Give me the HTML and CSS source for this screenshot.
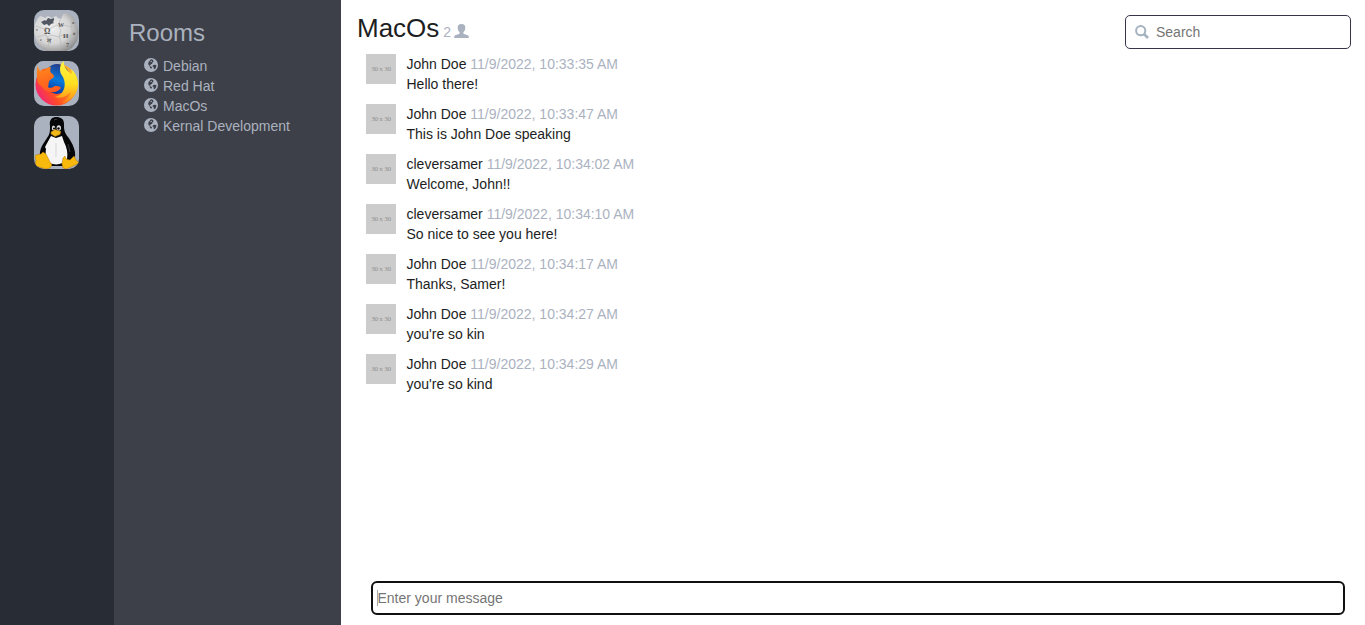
FILE: index.html
```html
<!DOCTYPE html>
<html lang="en">
<head>
<meta charset="utf-8">
<title>Chat</title>
<link rel="stylesheet" href="styles.css">
</head>
<body>
<svg class="defs" aria-hidden="true">
  <symbol id="globe" viewBox="0 0 14 14">
    <path fill="#abb2bf" fill-rule="evenodd" d="M7 0a7 7 0 1 0 0 14A7 7 0 0 0 7 0zM6 1.900L7.400 1.200l1.800.8.3 1.600-1 1-.3 1.200-1.500.7-.7 1.300-1.200-.4-.6-1.700.5-1.900 1-.9zM9 7.200l1.500-.4 1.900.3-.3 2.200-1.300 2-1-.4-.1-1.600-1.200-.8zM5.500 8l1.600.4 1 1.200-.8 1.100-1.200-.8z"/>
    <path fill="#abb2bf" d="M6.400 3.200l1.400-.4.2.9-1.300.6z"/>
  </symbol>
</svg>
<div class="app">
  <nav class="namespaces">
    <div class="tile">
      <svg width="45" height="41" viewBox="0 0 45 41">
        <defs><radialGradient id="wiki" cx=".4" cy=".4" r=".65"><stop offset="0" stop-color="#efefef"/><stop offset=".6" stop-color="#d5d5d5"/><stop offset="1" stop-color="#8c8c8c"/></radialGradient></defs>
        <path fill="url(#wiki)" d="M4 8L8 4l5 1 3-2 5 2 4-2 4 1 4-1 6 4 4 7 2 8-2 9-5 7-7 4H14l-7-4-5-8-2-8 1-8z"/>
        <path fill="#adb3be" d="M6 5l7-3 8-1 6 1 2 3-2 4-3-1-2-2-4 2-4-2-3 2-4-2z"/>
        <path fill="#505760" d="M7 12l4-2 1 1 2-3 3 1 3-1v2l-1 2 1 1-3 1-2 2-2-2-3 1z"/>
        <path fill="none" stroke="#b8b8b8" stroke-width=".7" d="M2 16l8 3 2-2 3 2 8-4 4 2 2-2 9 2 5-3M3 27l8-2 3 2 3-2 8 2 3-2 4 2 9-3M12 17v9l3 4-1 9M26 10l-1 7 2 3-2 7 2 4-2 9M38 8l-1 10 2 4-3 9"/>
        <g class="glyphs"><text x="10" y="24" font-size="8">Ω</text><text x="24" y="17" font-size="6">W</text><text x="13" y="33" font-size="7">ন</text><text x="29" y="28" font-size="7">И</text><text x="32" y="37" font-size="6">7</text><text x="38" y="14" font-size="4">я</text><text x="2" y="21" font-size="4">ν</text><text x="6" y="31" font-size="4">c</text><text x="39" y="25" font-size="4">й</text></g>
      </svg>
    </div>
    <div class="tile">
      <svg width="45" height="45" viewBox="0 0 45 45">
        <defs>
          <linearGradient id="ff" gradientUnits="userSpaceOnUse" x1="40" y1="12" x2="4" y2="36"><stop offset="0" stop-color="#ffb52b"/><stop offset=".4" stop-color="#ff7e1e"/><stop offset=".7" stop-color="#ff4a28"/><stop offset="1" stop-color="#f0257a"/></linearGradient>
          <linearGradient id="face" gradientUnits="userSpaceOnUse" x1="10" y1="4" x2="18" y2="36"><stop offset="0" stop-color="#ff8a1c"/><stop offset=".5" stop-color="#ff6a1c"/><stop offset="1" stop-color="#ff5425"/></linearGradient>
          <linearGradient id="sea" x1=".3" y1="1" x2=".6" y2="0"><stop offset="0" stop-color="#062f9c"/><stop offset=".5" stop-color="#087bdc"/><stop offset="1" stop-color="#233888"/></linearGradient>
          <linearGradient id="tail" x2="0" y2="1"><stop offset="0" stop-color="#fff344"/><stop offset=".55" stop-color="#ffdf20"/><stop offset="1" stop-color="#ff8a18"/></linearGradient>
        </defs>
        <circle cx="22.500" cy="23.500" r="21" fill="url(#ff)"/>
        <path fill="#abb2bf" d="M4 0h27L22 4 10 8 4 6z"/>
        <ellipse cx="23" cy="18" rx="13" ry="15" fill="url(#sea)"/>
        <path fill="url(#face)" d="M4 4c0 3 1 4 2 6 2-1 4-1 5 0 1-2 3-4 6-4-1 2-1 4 0 6 2 1 3 2 3 4-2 2-5 3-5 5-1 2 0 3-1 5 2 2 5 0 7-1 2 0 5 0 6 2-2 2-4 4-7 4-3 1-8-1-10-3L4 22c-1-5-2-12 0-18z"/>
        <path fill="url(#tail)" d="M30 0c-4 3-5 8-3 13 4 5 5 12 2 17-2 4-5 5-8 6 7 2 13-1 16-6-1 5-4 9-9 12 9-2 16-9 16-19 0-7-3-12-7-15 1 3 1 4 0 5-4-4-8-7-7-13z"/>
      </svg>
    </div>
    <div class="tile">
      <svg width="45" height="53" viewBox="0 0 45 53">
        <path fill="#050607" d="M22 1c-5 0-7 4-6 9 0 5 0 8-3 12C9 28 5 33 6 41l9 9h19l7-9c1-6-2-13-7-20-4-5-4-8-4-13 0-5-3-7-8-7z"/>
        <path fill="#f5f5f5" d="M17 20l5 2 6-2 2 6c3 6 4 11 3 17-3 5-11 7-17 4-4-3-5-8-4-14l-1-2z"/>
        <path fill="none" stroke="#ccc" stroke-width=".7" d="M22 27v14"/>
        <ellipse cx="19.500" cy="12" rx="1.700" ry="2.500" fill="#ddd"/><ellipse cx="24.800" cy="12" rx="2.200" ry="2.700" fill="#ddd"/>
        <circle cx="20" cy="12.500" r="1"/><circle cx="24.500" cy="12.500" r="1.200"/>
        <path fill="#efb817" stroke="#9b6500" stroke-width=".5" d="M17 16l4-2.500 6 2-1 3-5 2-4-2.500z"/>
        <path fill="#f7b90b" stroke="#b87800" stroke-width=".5" d="M2 39l5-1 2-2 3 2 4 8 2 3-2 3-4 1-11-3 1-6-1-3zM31 40l1 3 4 1 4-4 2 4 3 3-8 4-5 2-3-1-1-4 1-6z"/>
        <path fill="none" stroke="#555" stroke-width=".7" d="M20 4l3-1M34 28l2 8"/>
      </svg>
    </div>
  </nav>
  <aside class="rooms">
    <h3>Rooms</h3>
    <ul>
      <li><svg class="globe"><use href="#globe"/></svg>Debian</li>
      <li><svg class="globe"><use href="#globe"/></svg>Red Hat</li>
      <li><svg class="globe"><use href="#globe"/></svg>MacOs</li>
      <li><svg class="globe"><use href="#globe"/></svg>Kernal Development</li>
    </ul>
  </aside>
  <main class="chat">
    <header class="top">
      <div class="title"><span class="room-name">MacOs</span><span class="count">2</span><svg class="user" viewBox="0 0 15 14"><path fill="#abb2bf" d="M7.500 0c2.700 0 4 1.600 3.800 4-.1 2-.9 3.400-1.900 4.200v1.500l4.400 1.500c.8.4 1.100 1.300 1.100 2.800H.1c0-1.500.3-2.400 1.100-2.800l4.400-1.500V8.200C4.600 7.400 3.800 6 3.700 4 3.500 1.600 4.800 0 7.500 0z"/></svg></div>
      <div class="search"><svg viewBox="0 0 14 14"><g fill="none" stroke="#a5b2bf" stroke-width="2"><circle cx="5.700" cy="5.700" r="4.600"/><path stroke-width="2.700" d="M9 9l4 4"/></g></svg><input type="text" placeholder="Search"></div>
    </header>
    <ul class="messages">
      <li><span class="avatar">30 x 30</span><div><div>John Doe <time>11/9/2022, 10:33:35 AM</time></div><div>Hello there!</div></div></li>
      <li><span class="avatar">30 x 30</span><div><div>John Doe <time>11/9/2022, 10:33:47 AM</time></div><div>This is John Doe speaking</div></div></li>
      <li><span class="avatar">30 x 30</span><div><div>cleversamer <time>11/9/2022, 10:34:02 AM</time></div><div>Welcome, John!!</div></div></li>
      <li><span class="avatar">30 x 30</span><div><div>cleversamer <time>11/9/2022, 10:34:10 AM</time></div><div>So nice to see you here!</div></div></li>
      <li><span class="avatar">30 x 30</span><div><div>John Doe <time>11/9/2022, 10:34:17 AM</time></div><div>Thanks, Samer!</div></div></li>
      <li><span class="avatar">30 x 30</span><div><div>John Doe <time>11/9/2022, 10:34:27 AM</time></div><div>you're so kin</div></div></li>
      <li><span class="avatar">30 x 30</span><div><div>John Doe <time>11/9/2022, 10:34:29 AM</time></div><div>you're so kind</div></div></li>
    </ul>
    <div class="composer"><span class="caret"></span><input type="text" placeholder="Enter your message"></div>
  </main>
</div>
</body>
</html>
```
FILE: styles.css
```css
* { box-sizing: border-box; }
body { margin: 0; font: 14px/20px "Liberation Sans", Arial, sans-serif; color: #1c1e22; background: #fff; }
ul { list-style: none; margin: 0; padding: 0; }
.defs { display: none; }
.app { display: flex; height: 100vh; overflow: hidden; }
.namespaces { width: 114px; background: #282c34; display: flex; flex-direction: column; align-items: center; gap: 10px; padding-top: 10px; flex: none; }
.tile { width: 45px; border-radius: 10px; overflow: hidden; background: #abb2bf; margin-right: 1px; }
.tile svg { display: block; }
.glyphs { fill: #555; font-family: "Liberation Serif", "Noto Sans", serif; font-weight: bold; }
.rooms { width: 227px; flex: none; background: #3d4048; color: #abb2bf; padding: 20px 15px 0; }
.rooms h3 { margin: 0 0 10px; font-size: 24px; font-weight: 400; line-height: 26px; }
.rooms ul { padding-left: 15px; }
.rooms li { display: flex; height: 20px; gap: 5px; }
.globe { width: 14px; height: 14px; margin-top: 2px; }
.chat { flex: 1; display: flex; flex-direction: column; padding: 0 14px 10px 16px; min-width: 0; }
.top { display: flex; justify-content: space-between; height: 54px; padding-top: 15px; }
.title { display: flex; align-items: baseline; height: 28px; line-height: 26px; }
.room-name { font-size: 26px; }
.count { color: #abb2bf; margin: 0 3px 0 4px; }
.user { width: 15px; height: 14px; transform: translateY(1px); }
.search { width: 226px; height: 34px; border: 1px solid #35354a; border-radius: 5px; display: flex; align-items: center; gap: 7px; padding-left: 9px; }
.search svg { width: 14px; height: 14px; }
input { border: 0; outline: 0; padding: 0; background: transparent; font: inherit; color: inherit; flex: 1; min-width: 0; }
input::placeholder { color: #757575; opacity: 1; }
.messages { flex: 1; padding-left: 9px; }
.messages li { display: flex; height: 50px; gap: 10.5px; }
.avatar { width: 30px; height: 30px; background: #ccc; color: #909090; font: 7px/30px "Liberation Serif", serif; letter-spacing: -.2px; text-align: center; white-space: nowrap; }
time { color: #abb2bf; }
.composer { height: 34px; border: 2px solid #101010; border-radius: 6px; margin: 0 6px 0 14px; display: flex; align-items: center; padding-left: 4px; }
.caret { width: 1px; height: 16px; background: #aaa; margin-right: -.5px; }
```
